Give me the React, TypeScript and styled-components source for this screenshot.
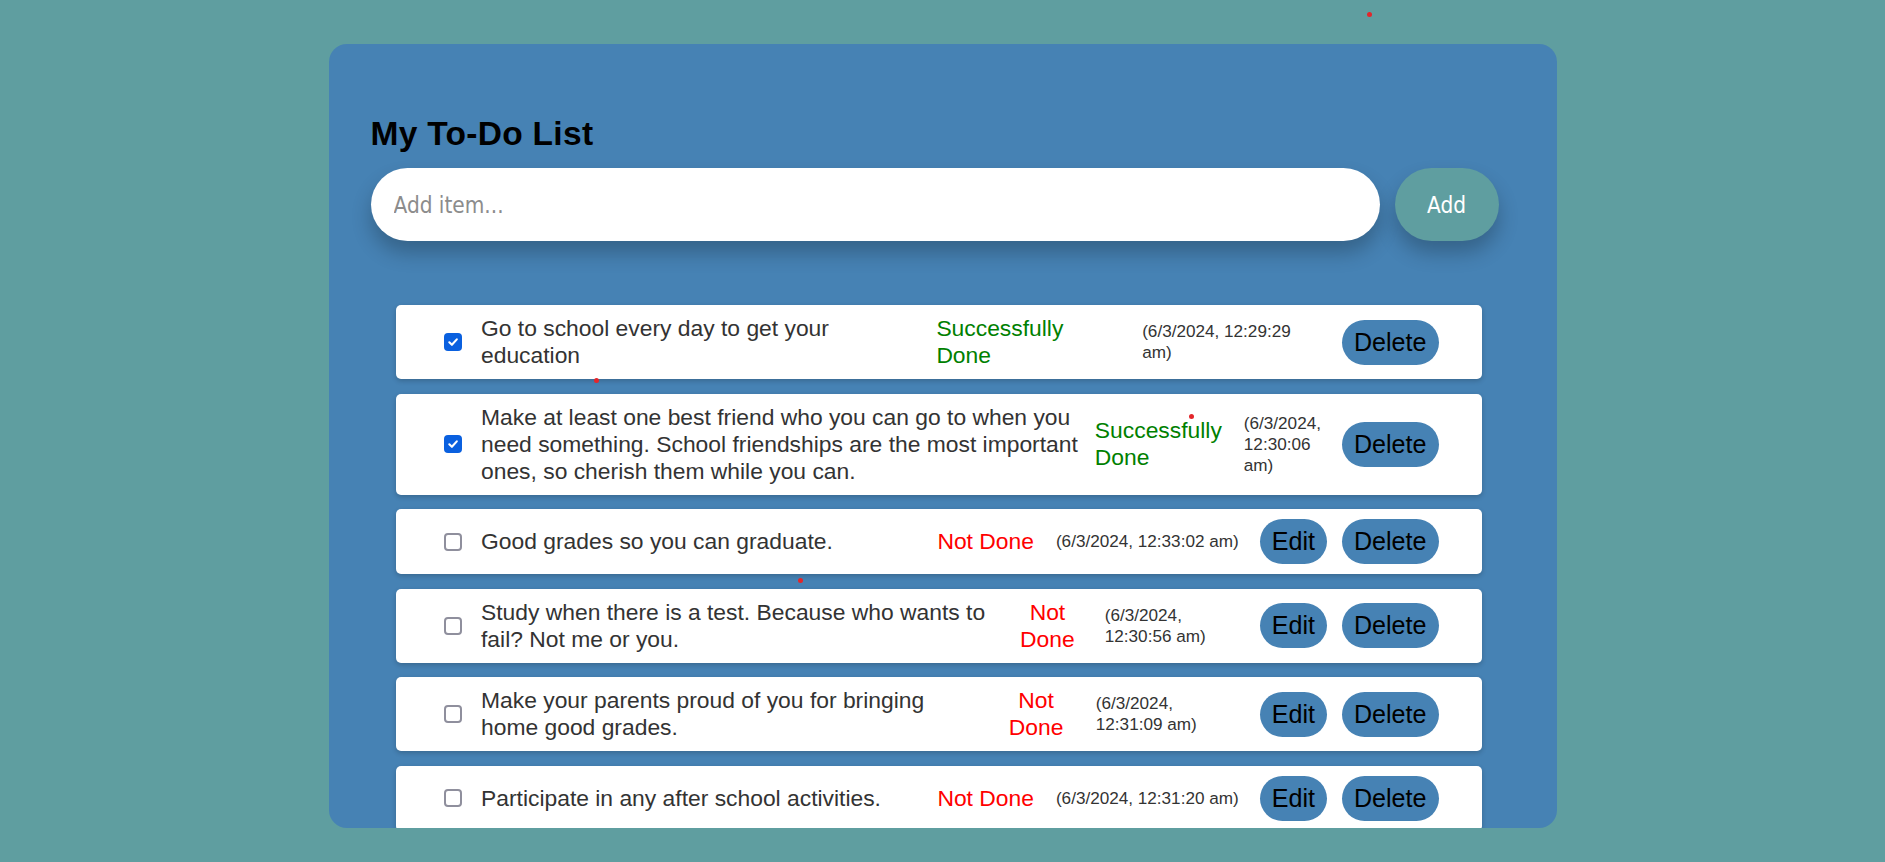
import React from "react";
import styled, { createGlobalStyle, css } from "styled-components";

const GlobalStyle = createGlobalStyle`
  html, body {
    margin: 0;
    padding: 0;
    background: #5f9ea0;
    overflow: hidden;
  }
  body {
    font-family: "Liberation Sans", Arial, sans-serif;
  }
`;

const Card = styled.main`
  box-sizing: border-box;
  width: 1228px;
  height: 784px;
  margin: 44px auto 0;
  padding: 71px 42px 0;
  background: #4682b4;
  border-radius: 18px;
`;

const Title = styled.h1`
  margin: 0;
  font-family: "Liberation Sans", Arial, sans-serif;
  font-weight: bold;
  font-size: 33.5px;
  letter-spacing: 0.3px;
  line-height: normal;
  color: #000;
`;

const InputRow = styled.form`
  display: flex;
  gap: 14.5px;
  margin: 15px 0 0;
  padding-right: 16px;
`;

const uiFont = css`
  font-family: "DejaVu Sans Condensed", "DejaVu Sans", sans-serif;
  font-stretch: condensed;
  font-size: 22.4px;
`;

const TextInput = styled.input`
  ${uiFont};
  flex: 1 1 auto;
  box-sizing: border-box;
  height: 73.4px;
  border: none;
  outline: none;
  border-radius: 37px;
  padding: 0 23px;
  background: #fff;
  color: #222;
  box-shadow: 0 12px 20px rgba(0, 0, 0, 0.24);
  &::placeholder {
    color: #8c8c8c;
  }
`;

const AddButton = styled.button`
  ${uiFont};
  flex: 0 0 104px;
  height: 73.4px;
  border: none;
  border-radius: 37px;
  background: #5f9ea0;
  color: #fff;
  box-shadow: 0 12px 20px rgba(0, 0, 0, 0.24);
  cursor: pointer;
`;

const List = styled.ul`
  list-style: none;
  margin: 64px 0 0;
  padding: 0 33px 0 25px;
  display: flex;
  flex-direction: column;
  gap: 14.5px;
`;

const Row = styled.li`
  display: flex;
  align-items: center;
  padding: 10px 43px 10px 48px;
  background: #fff;
  border-radius: 5px;
  box-shadow: 0 2px 5px rgba(0, 0, 0, 0.2);
`;

const CheckBox = styled.span<{ $checked: boolean }>`
  flex: 0 0 auto;
  box-sizing: border-box;
  width: 18px;
  height: 18px;
  margin-right: 19.5px;
  border-radius: 4px;
  display: flex;
  align-items: center;
  justify-content: center;
  ${(p) =>
    p.$checked
      ? css`
          background: #0a60df;
          border: none;
        `
      : css`
          background: #fff;
          border: 2px solid #8f8f9d;
        `}
`;

const ItemText = styled.span`
  flex: 1 1 auto;
  font-size: 22.85px;
  line-height: normal;
  color: #333;
`;

const Status = styled.span<{ $done: boolean }>`
  margin-left: 12px;
  font-size: 22.85px;
  line-height: normal;
  color: ${(p) => (p.$done ? "#008000" : "#ff0000")};
  text-align: ${(p) => (p.$done ? "left" : "center")};
`;

const DateText = styled.span`
  margin-left: 22px;
  font-size: 17.14px;
  line-height: normal;
  color: #333;
`;

const ActionButton = styled.button`
  flex: 0 0 auto;
  margin-left: 21px;
  padding: 8px 12px;
  border: none;
  border-radius: 23px;
  background: #4682b4;
  color: #000;
  font-family: "Liberation Sans", Arial, sans-serif;
  font-size: 25.1px;
  line-height: normal;
  cursor: pointer;
  & + & {
    margin-left: 15px;
  }
`;

const DotLayer = styled.div`
  position: fixed;
  inset: 0;
  pointer-events: none;
`;

const Dot = styled.span<{ $x: number; $y: number }>`
  position: absolute;
  left: ${(p) => p.$x - 2.5}px;
  top: ${(p) => p.$y - 2.5}px;
  width: 5px;
  height: 5px;
  border-radius: 50%;
  background: #e3262b;
`;

type Todo = { text: string; done: boolean; date: string };

const todos: Todo[] = [
  {
    text: "Go to school every day to get your education",
    done: true,
    date: "(6/3/2024, 12:29:29 am)",
  },
  {
    text:
      "Make at least one best friend who you can go to when you need something. School friendships are the most important ones, so cherish them while you can.",
    done: true,
    date: "(6/3/2024, 12:30:06 am)",
  },
  {
    text: "Good grades so you can graduate.",
    done: false,
    date: "(6/3/2024, 12:33:02 am)",
  },
  {
    text: "Study when there is a test. Because who wants to fail? Not me or you.",
    done: false,
    date: "(6/3/2024, 12:30:56 am)",
  },
  {
    text: "Make your parents proud of you for bringing home good grades.",
    done: false,
    date: "(6/3/2024, 12:31:09 am)",
  },
  {
    text: "Participate in any after school activities.",
    done: false,
    date: "(6/3/2024, 12:31:20 am)",
  },
];

const dots = [
  { x: 1369, y: 14 },
  { x: 596, y: 380 },
  { x: 1191.5, y: 416.5 },
  { x: 800, y: 580 },
];

function Check({ checked }: { checked: boolean }) {
  return (
    <CheckBox $checked={checked} role="checkbox" aria-checked={checked}>
      {checked && (
        <svg width="12" height="12" viewBox="0 0 12 12" aria-hidden="true">
          <path
            d="M2.3 6.3 L4.9 8.8 L9.8 3.4"
            fill="none"
            stroke="#fff"
            strokeWidth="2.1"
            strokeLinecap="round"
            strokeLinejoin="round"
          />
        </svg>
      )}
    </CheckBox>
  );
}

export default function App() {
  return (
    <>
      <GlobalStyle />
      <Card>
        <Title>My To-Do List</Title>
        <InputRow onSubmit={(e) => e.preventDefault()}>
          <TextInput placeholder="Add item..." />
          <AddButton type="submit">Add</AddButton>
        </InputRow>
        <List>
          {todos.map((t, i) => (
            <Row key={i}>
              <Check checked={t.done} />
              <ItemText>{t.text}</ItemText>
              <Status $done={t.done}>{t.done ? "Successfully Done" : "Not Done"}</Status>
              <DateText>{t.date}</DateText>
              {!t.done && <ActionButton>Edit</ActionButton>}
              <ActionButton>Delete</ActionButton>
            </Row>
          ))}
        </List>
      </Card>
      <DotLayer>
        {dots.map((d, i) => (
          <Dot key={i} $x={d.x} $y={d.y} />
        ))}
      </DotLayer>
    </>
  );
}
